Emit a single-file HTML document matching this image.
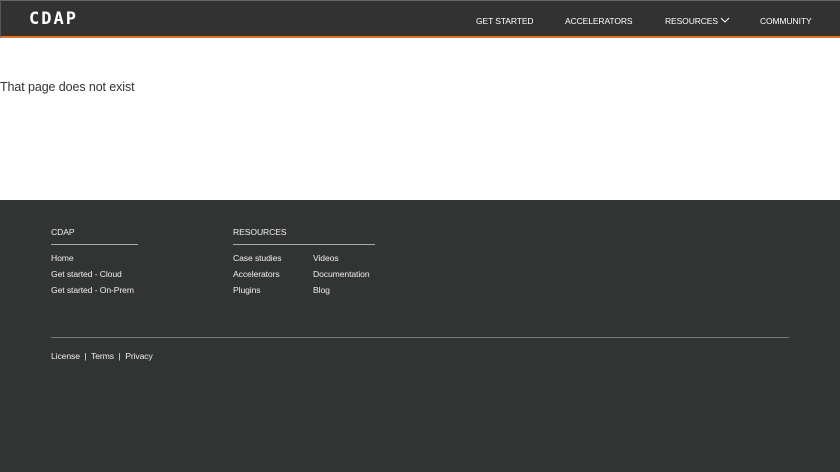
<!DOCTYPE html>
<html><head><meta charset="utf-8"><style>
*{margin:0;padding:0;box-sizing:border-box}
body{width:840px;height:472px;overflow:hidden;background:#fff;font-family:"Liberation Sans",sans-serif;position:relative}
.hdr{position:absolute;left:0;top:0;width:840px;height:38px;background:#323232;border-top:1px solid #666;border-left:1px solid #555;border-bottom:2px solid #e8711e}
.logo{position:absolute;left:28px;top:8px;color:#fff;font-weight:bold;font-size:17px;letter-spacing:2px;font-family:"DejaVu Sans Mono","Liberation Mono",monospace}
.nav{position:absolute;top:15px;color:#fff;font-size:8.5px;letter-spacing:-0.1px}
.msg{position:absolute;left:0;top:80px;font-size:12.5px;color:#333;letter-spacing:-0.1px}
.ftr{position:absolute;left:0;top:200px;width:840px;height:272px;background:#323333;color:#eee;font-size:8.6px;letter-spacing:-0.1px}
.ftr div{position:absolute}
.line{height:1px;background:#aaa}
</style></head><body>
<div class="hdr">
<div class="logo">CDAP</div>
<div class="nav" style="left:475px">GET STARTED</div>
<div class="nav" style="left:564px">ACCELERATORS</div>
<div class="nav" style="left:664px">RESOURCES <svg width="10" height="6" viewBox="0 0 10 6" style="vertical-align:1px"><path d="M1 1l4 4 4-4" fill="none" stroke="#fff" stroke-width="1"/></svg></div>
<div class="nav" style="left:759px">COMMUNITY</div>
</div>
<div class="msg">That page does not exist</div>
<div class="ftr">
<div style="left:51px;top:27px">CDAP</div>
<div class="line" style="left:51px;top:44px;width:87px"></div>
<div style="left:51px;top:53px">Home</div>
<div style="left:51px;top:69px">Get started - Cloud</div>
<div style="left:51px;top:85px">Get started - On-Prem</div>
<div style="left:233px;top:27px">RESOURCES</div>
<div class="line" style="left:233px;top:44px;width:142px"></div>
<div style="left:233px;top:53px">Case studies</div>
<div style="left:233px;top:69px">Accelerators</div>
<div style="left:233px;top:85px">Plugins</div>
<div style="left:313px;top:53px">Videos</div>
<div style="left:313px;top:69px">Documentation</div>
<div style="left:313px;top:85px">Blog</div>
<div class="line" style="left:51px;top:137px;width:738px;background:#777"></div>
<div style="left:51px;top:151px">License &nbsp;|&nbsp; Terms &nbsp;|&nbsp; Privacy</div>
</div>
</body></html>
